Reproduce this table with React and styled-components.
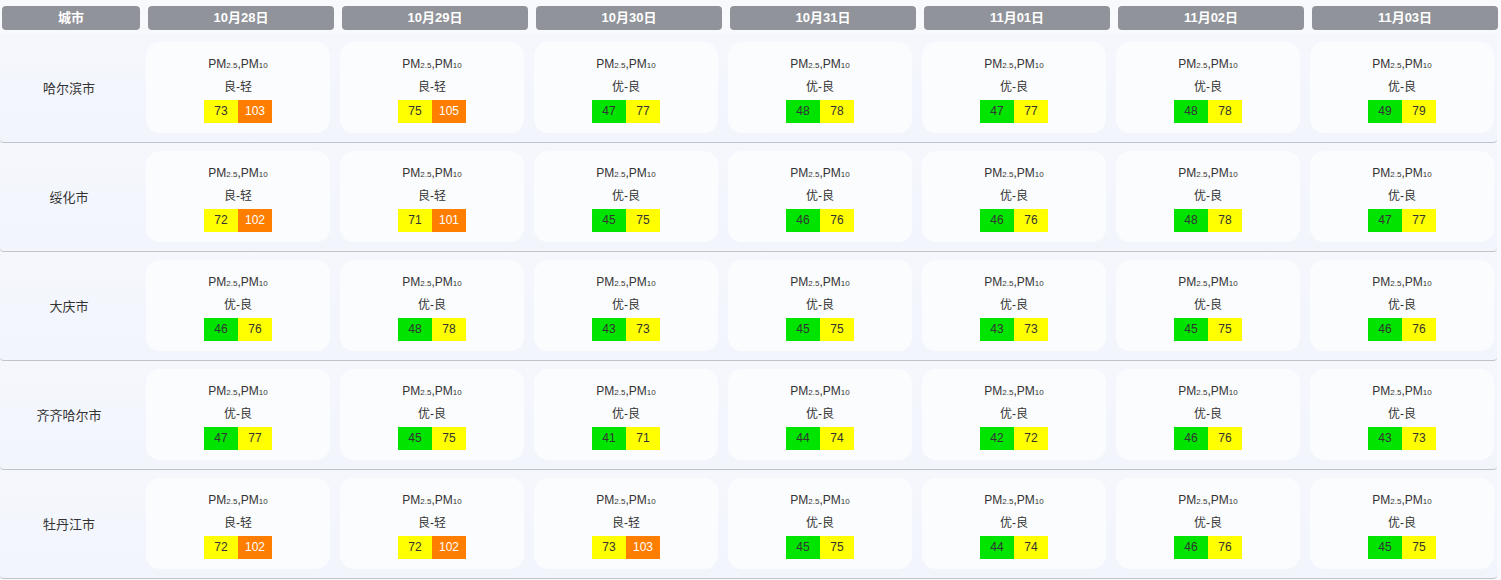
import styled, { createGlobalStyle } from "styled-components";

const GlobalStyle = createGlobalStyle`
  body {
    margin: 0;
    background: #f8f9fd;
    font-family: "Liberation Sans", "Noto Sans CJK SC", sans-serif;
    color: #333;
  }
`;

const dates = ["10月28日", "10月29日", "10月30日", "10月31日", "11月01日", "11月02日", "11月03日"];

// [pm2.5, pm10] per day
const cities = [
  { name: "哈尔滨市", days: [[73, 103], [75, 105], [47, 77], [48, 78], [47, 77], [48, 78], [49, 79]] },
  { name: "绥化市", days: [[72, 102], [71, 101], [45, 75], [46, 76], [46, 76], [48, 78], [47, 77]] },
  { name: "大庆市", days: [[46, 76], [48, 78], [43, 73], [45, 75], [43, 73], [45, 75], [46, 76]] },
  { name: "齐齐哈尔市", days: [[47, 77], [45, 75], [41, 71], [44, 74], [42, 72], [46, 76], [43, 73]] },
  { name: "牡丹江市", days: [[72, 102], [72, 102], [73, 103], [45, 75], [44, 74], [46, 76], [45, 75]] },
];

const levelOf = (v) => (v <= 50 ? "good" : v <= 100 ? "fair" : "light");
const levelName = { good: "优", fair: "良", light: "轻" };
const levelColor = { good: "#00e400", fair: "#ffff00", light: "#ff7e00" };

export default function App() {
  return (
    <>
      <GlobalStyle />
      <Table>
        <HeaderRow>
          <HeadCell>城市</HeadCell>
          {dates.map((d) => (
            <HeadCell key={d}>{d}</HeadCell>
          ))}
        </HeaderRow>
        {cities.map((c) => (
          <Row key={c.name}>
            <CityName>{c.name}</CityName>
            {c.days.map(([a, b], i) => {
              const la = levelOf(a);
              const lb = levelOf(b);
              return (
                <Card key={i}>
                  <Pollutant>
                    PM<Sub>2.5</Sub>,PM<Sub>10</Sub>
                  </Pollutant>
                  <Level>
                    {levelName[la]}-{levelName[lb]}
                  </Level>
                  <Values>
                    <Value $level={la}>{a}</Value>
                    <Value $level={lb}>{b}</Value>
                  </Values>
                </Card>
              );
            })}
          </Row>
        ))}
      </Table>
    </>
  );
}

const Table = styled.div`
  width: 1501px;
  padding-top: 6px;
  box-sizing: border-box;
`;

const HeaderRow = styled.div`
  display: grid;
  grid-template-columns: 138px repeat(7, 186px);
  column-gap: 8px;
  padding-left: 2px;
  margin-bottom: 4px;
`;

const HeadCell = styled.div`
  height: 24px;
  line-height: 24px;
  background: #909399;
  border-radius: 4px;
  color: #fff;
  font-size: 13px;
  font-weight: 700;
  text-align: center;
`;

const Row = styled.div`
  display: grid;
  grid-template-columns: 138px repeat(7, 186px);
  column-gap: 8px;
  align-items: center;
  width: 1497px;
  height: 109px;
  padding: 8px 0 9px;
  box-sizing: border-box;
  background: linear-gradient(180deg, #f5f7fd 0%, #f2f5fc 100%);
  border-bottom: 1px solid #bfc3cc;
  border-radius: 0 0 4px 4px;
  box-shadow: 0 1px 1px rgba(0, 0, 0, 0.05);
`;

const CityName = styled.div`
  text-align: center;
  font-size: 13px;
  color: #333;
`;

const Card = styled.div`
  height: 91px;
  width: 184px;
  background: #fbfcfe;
  border-radius: 14px;
  display: flex;
  flex-direction: column;
  align-items: center;
  padding-top: 14px;
  box-sizing: border-box;
  gap: 5px;
`;

const Pollutant = styled.div`
  font-size: 12px;
  line-height: 16px;
  color: #333;
`;

const Sub = styled.span`
  font-size: 8px;
`;

const Level = styled.div`
  font-size: 12px;
  line-height: 16px;
  color: #333;
`;

const Values = styled.div`
  display: flex;
`;

const Value = styled.div`
  width: 34px;
  height: 23px;
  line-height: 23px;
  text-align: center;
  font-size: 12px;
  background: ${(p) => levelColor[p.$level]};
  color: ${(p) => (p.$level === "light" ? "#fff" : "#333")};
`;
